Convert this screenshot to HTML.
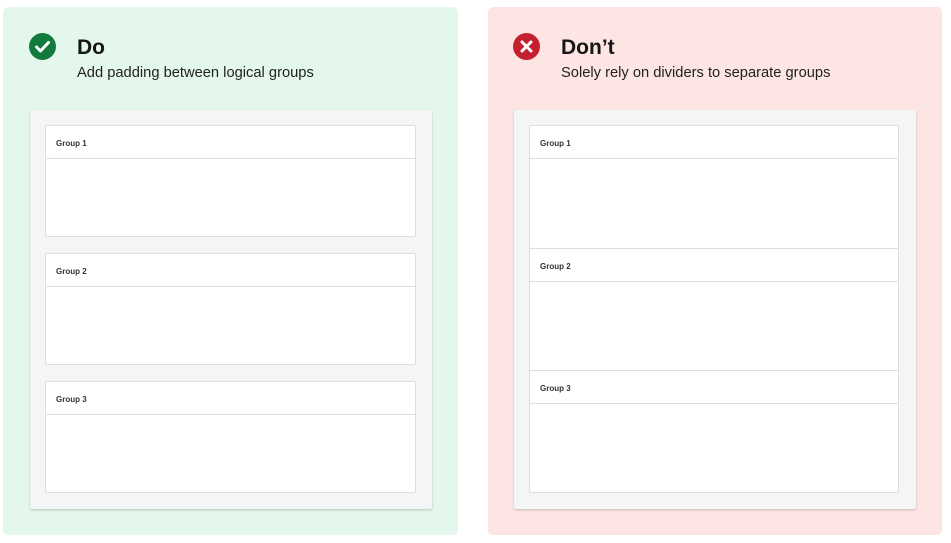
<!DOCTYPE html>
<html><head><style>
*{margin:0;padding:0;box-sizing:border-box}
body{width:951px;height:543px;background:#fff;font-family:"Liberation Sans",sans-serif;position:relative;overflow:hidden}
.panel{position:absolute;top:7px;height:528px;border-radius:5px}
.g{left:3px;width:455px;background:#e3f7ec}
.r{left:488px;width:454px;background:#fce5e3}
.icon{position:absolute;top:33px;width:27px;height:27px}
.t{position:absolute;top:36px;font-size:21px;font-weight:bold;color:#161616}
.s{position:absolute;top:65px;font-size:14.7px;color:#222}
.box{position:absolute;top:110px;width:402px;height:399px;background:#f4f5f7;border-radius:2px;box-shadow:0 1px 2px rgba(0,0,0,.2)}
.card{position:absolute;left:15px;width:371px;background:#fff;border:1px solid #dcdde0;border-radius:2px}
.h{height:33px;border-bottom:1px solid #dcdde0;font-size:8px;font-weight:bold;color:#333;padding:13px 0 0 10px}
</style></head><body>
<div class="panel g"></div>
<div class="panel r"></div>
<svg class="icon" style="left:29px" viewBox="0 0 27 27"><circle cx="13.5" cy="13.5" r="13.5" fill="#117a3c"/><path d="M7.5 14 L11.5 18 L19.5 9.5" stroke="#fff" stroke-width="3" fill="none" stroke-linecap="round" stroke-linejoin="round"/></svg>
<div class="t" style="left:77px">Do</div>
<div class="s" style="left:77px">Add padding between logical groups</div>
<svg class="icon" style="left:513px" viewBox="0 0 27 27"><circle cx="13.5" cy="13.5" r="13.5" fill="#c5202e"/><path d="M9 9 L18 18 M18 9 L9 18" stroke="#fff" stroke-width="3" stroke-linecap="round"/></svg>
<div class="t" style="left:561px">Don’t</div>
<div class="s" style="left:561px">Solely rely on dividers to separate groups</div>
<div class="box" style="left:30px">
 <div class="card" style="top:15px;height:112px"><div class="h">Group 1</div></div>
 <div class="card" style="top:143px;height:112px"><div class="h">Group 2</div></div>
 <div class="card" style="top:271px;height:112px"><div class="h">Group 3</div></div>
</div>
<div class="box" style="left:514px">
 <div class="card" style="top:15px;height:368px;width:370px">
  <div class="h">Group 1</div>
  <div style="height:90px;border-bottom:1px solid #dcdde0"></div>
  <div class="h">Group 2</div>
  <div style="height:89px;border-bottom:1px solid #dcdde0"></div>
  <div class="h">Group 3</div>
 </div>
</div>
</body></html>
